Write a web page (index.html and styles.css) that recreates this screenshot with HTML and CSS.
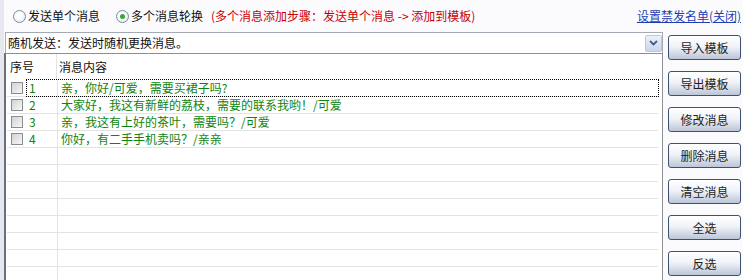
FILE: index.html
```html
<!DOCTYPE html>
<html lang="zh-CN">
  <head>
    <meta charset="UTF-8" />
    <meta name="viewport" content="width=device-width, initial-scale=1.0" />
    <title>消息轮换</title>
    <link rel="stylesheet" href="styles.css">
  </head>
  <body>
    <div class="window">
      <div class="topbar">
        <label class="opt"><span class="radio"></span>发送单个消息</label>
        <label class="opt opt-second"><span class="radio on"></span>多个消息轮换</label>
        <span class="hint">(多个消息添加步骤：发送单个消息 -&gt; 添加到模板)</span>
        <a class="blacklist" href="#">设置禁发名单(关闭)</a>
      </div>

      <div class="main">
        <div class="editor">
          <div class="combo">
            <span class="combo-text">随机发送：发送时随机更换消息。</span>
            <span class="combo-btn">
              <svg width="9" height="6" viewBox="0 0 9 6">
                <path d="M1 1 L4.5 4.5 L8 1" fill="none" stroke="#4b5d80" stroke-width="1.8" />
              </svg>
            </span>
          </div>

          <div class="list">
            <div class="list-head">
              <div class="head-no">序号</div>
              <div class="head-msg">消息内容</div>
            </div>

            <div class="row">
              <span class="check"></span>
              <div class="item focus">
                <span class="cell-no">1</span>
                <span class="cell-msg">亲，你好/可爱，需要买裙子吗?</span>
              </div>
            </div>
            <div class="row">
              <span class="check"></span>
              <div class="item">
                <span class="cell-no">2</span>
                <span class="cell-msg">大家好，我这有新鲜的荔枝，需要的联系我哟！/可爱</span>
              </div>
            </div>
            <div class="row">
              <span class="check"></span>
              <div class="item">
                <span class="cell-no">3</span>
                <span class="cell-msg">亲，我这有上好的茶叶，需要吗？/可爱</span>
              </div>
            </div>
            <div class="row">
              <span class="check"></span>
              <div class="item">
                <span class="cell-no">4</span>
                <span class="cell-msg">你好，有二手手机卖吗？/亲亲</span>
              </div>
            </div>

            <!-- 빈 줄 -->
            <div class="row"><span class="check empty"></span><div class="item"><span class="cell-no"></span><span class="cell-msg"></span></div></div>
            <div class="row"><span class="check empty"></span><div class="item"><span class="cell-no"></span><span class="cell-msg"></span></div></div>
            <div class="row"><span class="check empty"></span><div class="item"><span class="cell-no"></span><span class="cell-msg"></span></div></div>
            <div class="row"><span class="check empty"></span><div class="item"><span class="cell-no"></span><span class="cell-msg"></span></div></div>
            <div class="row"><span class="check empty"></span><div class="item"><span class="cell-no"></span><span class="cell-msg"></span></div></div>
            <div class="row"><span class="check empty"></span><div class="item"><span class="cell-no"></span><span class="cell-msg"></span></div></div>
            <div class="row"><span class="check empty"></span><div class="item"><span class="cell-no"></span><span class="cell-msg"></span></div></div>
            <div class="row"><span class="check empty"></span><div class="item"><span class="cell-no"></span><span class="cell-msg"></span></div></div>
          </div>
        </div>

        <div class="buttons">
          <button class="btn">导入模板</button>
          <button class="btn">导出模板</button>
          <button class="btn">修改消息</button>
          <button class="btn">删除消息</button>
          <button class="btn">清空消息</button>
          <button class="btn">全选</button>
          <button class="btn">反选</button>
        </div>
      </div>
    </div>
  </body>
</html>
```

FILE: styles.css
```css
body {
  margin: 0;
  background-color: #fbfbfd;
  font-family: "Noto Sans CJK SC", "Noto Sans", sans-serif;
  font-size: 12px;
  line-height: 16px;
  color: #111;
}

.window {
  display: flex;
  flex-direction: column;
  height: 280px;
  border-left: 4px solid #e7e7ef;
  overflow: hidden;
}

/* 상단 옵션 줄 */
.topbar {
  display: flex;
  align-items: center;
  height: 32px;
  padding-left: 9px;
}

.opt {
  display: flex;
  align-items: center;
}

.opt-second {
  margin-left: 16px;
}

.radio {
  width: 13px;
  height: 13px;
  box-sizing: border-box;
  border: 1px solid #7b8ba3;
  border-radius: 50%;
  background: radial-gradient(circle at 40% 40%, #ffffff 30%, #dfe3ea 100%);
  margin-right: 2px;
  position: relative;
}

.radio.on::after {
  content: "";
  position: absolute;
  left: 3px;
  top: 3px;
  width: 5px;
  height: 5px;
  border-radius: 50%;
  background-color: #34a934;
}

.hint {
  margin-left: 8px;
  color: #c80000;
}

.blacklist {
  margin-left: auto;
  margin-right: 2px;
  color: #1f3db5;
  text-decoration: underline;
}

/* 본문 */
.main {
  display: flex;
  flex: 1;
  min-height: 0;
}

.editor {
  display: flex;
  flex-direction: column;
  width: 659px;
}

.combo {
  display: flex;
  align-items: center;
  height: 21px;
  box-sizing: border-box;
  margin-left: 1px;
  border: 1px solid #a4aab3;
  border-bottom: none;
  background-color: #fff;
}

.combo-text {
  flex: 1;
  padding-left: 2px;
}

.combo-btn {
  display: flex;
  align-items: center;
  justify-content: center;
  width: 17px;
  height: 17px;
  box-sizing: border-box;
  margin: 1px 0 1px 0;
  border: 1px solid #b9c7df;
  border-radius: 2px;
  background: linear-gradient(#edf2fb, #c9d6ec);
}

.list {
  flex: 1;
  background-color: #fff;
  border-top: 1px solid #8d8f94;
  border-left: 2px solid #6c707b;
  border-right: 1px solid #8f9196;
  overflow: hidden;
}

.list-head {
  display: flex;
  height: 26px;
  align-items: center;
  margin-left: 1px;
}

.head-no {
  width: 50px;
  height: 100%;
  box-sizing: border-box;
  padding-left: 3px;
  display: flex;
  align-items: center;
  border-right: 1px solid #e4e4e4;
}

.head-msg {
  padding-left: 2px;
}

.row {
  display: flex;
  height: 16px;
  margin: 0 4px 0 1px;
  border-bottom: 1px solid #e3e3e3;
  color: #0f850f;
}

.check {
  width: 12px;
  height: 12px;
  box-sizing: border-box;
  margin: 2px 4px 0 4px;
  border: 1px solid #8c8d8f;
  background: linear-gradient(135deg, #d2d2d2, #f7f7f7);
}

.check.empty {
  border-color: transparent;
  background: none;
}

.item {
  display: flex;
  flex: 1;
  height: 16px;
}

.item.focus {
  outline: 1px dotted #000;
  outline-offset: 0;
}

.cell-no {
  width: 31px;
  box-sizing: border-box;
  padding-left: 2px;
  border-right: 1px solid #e4e4e4;
}

.cell-msg {
  padding-left: 3px;
}

/* 오른쪽 버튼 */
.buttons {
  display: flex;
  flex-direction: column;
  gap: 11px;
  padding-top: 3px;
  margin-left: 5px;
}

.btn {
  width: 73px;
  height: 25px;
  border: 1px solid #3f5070;
  border-radius: 3px;
  background: linear-gradient(#ffffff 0%, #f1f3f8 45%, #bcc6d8 100%);
  font-family: "Noto Sans CJK SC", sans-serif;
  font-size: 12px;
  color: #1c1c1c;
  padding: 0;
}
```
